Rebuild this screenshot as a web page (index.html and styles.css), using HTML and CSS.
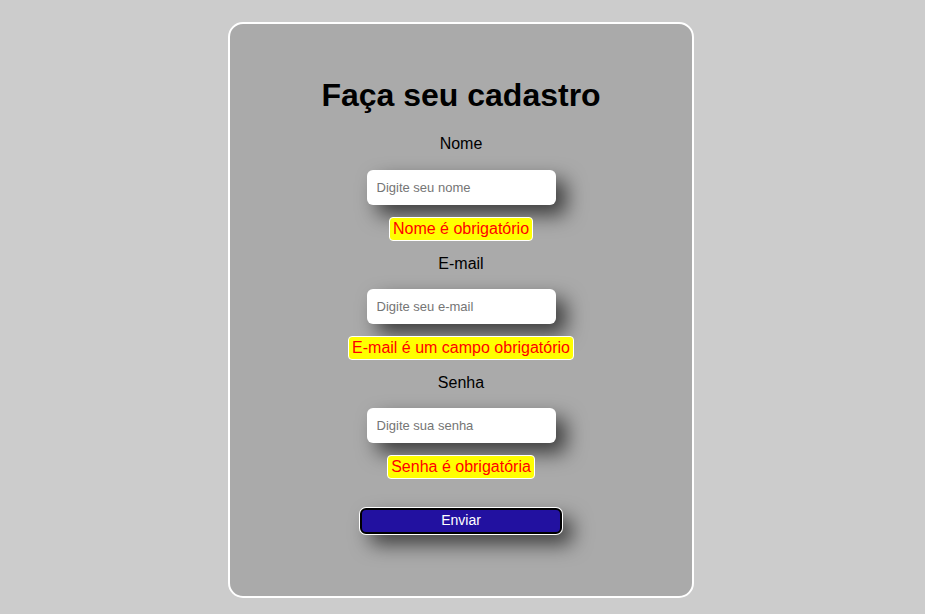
FILE: index.html
```html
<!DOCTYPE html>
<html lang="pt-BR">
<head>
<meta charset="utf-8">
<title>Cadastro</title>
<link rel="stylesheet" href="styles.css">
</head>
<body>
<main class="card">
  <h1 class="title">Faça seu cadastro</h1>
  <form class="form">
    <label class="label" for="nome">Nome</label>
    <input class="field" id="nome" type="text" placeholder="Digite seu nome">
    <span class="error">Nome é obrigatório</span>

    <label class="label" for="email">E-mail</label>
    <input class="field" id="email" type="email" placeholder="Digite seu e-mail">
    <span class="error">E-mail é um campo obrigatório</span>

    <label class="label" for="senha">Senha</label>
    <input class="field" id="senha" type="password" placeholder="Digite sua senha">
    <span class="error">Senha é obrigatória</span>

    <button class="submit" type="button">Enviar</button>
  </form>
</main>
</body>
</html>
```
FILE: styles.css
```css
* { box-sizing: border-box; }
html, body { margin: 0; padding: 0; }
body {
  background: #cccccc;
  font-family: "Liberation Sans", Arial, sans-serif;
  height: 614px;
  overflow: hidden;
}
.card {
  width: 466px;
  height: 576px;
  margin: 22px 0 0 228px;
  background: #aaaaaa;
  border: 2px solid #ffffff;
  border-radius: 15px;
  display: flex;
  flex-direction: column;
  align-items: center;
  padding-top: 53px;
}
.title {
  margin: 0;
  font-size: 32px;
  font-weight: bold;
  color: #000;
  line-height: 37px;
}
.form {
  display: flex;
  flex-direction: column;
  align-items: center;
  margin-top: 21px;
}
.label {
  font-size: 16px;
  line-height: 18px;
  color: #000;
  margin-top: 14px;
}
.label:first-child { margin-top: 0; }
.field {
  margin-top: 16px;
  width: 189px;
  height: 35px;
  border: none;
  border-radius: 6px;
  background: #fff;
  padding: 0 10px;
  font-family: "Liberation Sans", Arial, sans-serif;
  font-size: 13px;
  box-shadow: 10px 10px 20px rgba(0, 0, 0, 0.65);
  outline: none;
}
.label:first-child + .field { margin-top: 17px; }
.field::placeholder { color: #757575; }
.error {
  margin-top: 12px;
  background: #ffff00;
  color: #ff0000;
  border: 1px solid #ffffff;
  border-radius: 4px;
  padding: 2px 3px;
  font-size: 16px;
  line-height: 18px;
}
.submit {
  margin-top: 29px;
  width: 202px;
  height: 26px;
  background: #2211a0;
  color: #ffffff;
  font-family: "Liberation Sans", Arial, sans-serif;
  font-weight: normal;
  font-size: 14px;
  line-height: 16px;
  border: 2px solid #000;
  border-radius: 6px;
  box-shadow: 0 0 0 1px #ffffff, 10px 10px 20px rgba(0, 0, 0, 0.65);
  padding: 0 0 2px;
}
```
